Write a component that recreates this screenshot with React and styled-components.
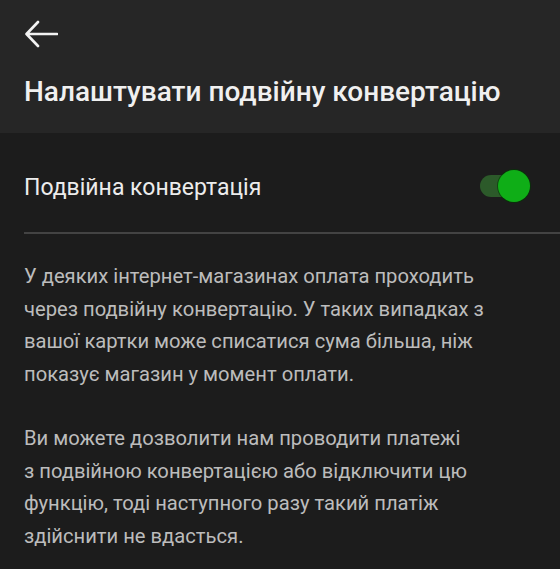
import React, { useState } from "react";
import styled, { createGlobalStyle } from "styled-components";

const GlobalStyle = createGlobalStyle`
  html, body {
    margin: 0;
    padding: 0;
    background: #1c1c1c;
  }
  body {
    font-family: Roboto, "Noto Sans", sans-serif;
  }
`;

const Screen = styled.div`
  width: 560px;
  min-height: 569px;
  background: #1c1c1c;
  overflow: hidden;
`;

const Header = styled.header`
  background: #262626;
  height: 133px;
  padding: 0 24px;
  box-sizing: border-box;
  display: flex;
  flex-direction: column;
`;

const BackButton = styled.button`
  width: 40px;
  height: 40px;
  margin-top: 14px;
  padding: 0;
  border: none;
  background: none;
  color: #f2f2f2;
  display: flex;
  align-items: center;
  cursor: pointer;
`;

const Title = styled.h1`
  margin: 20px 0 0;
  font-size: 28px;
  font-weight: 500;
  color: #f0f0f0;
  line-height: 36px;
`;

const Row = styled.div`
  display: flex;
  align-items: center;
  justify-content: space-between;
  margin-left: 24px;
  padding: 0 38px 0 0;
  height: 101px;
  border-bottom: 2px solid #434343;
  box-sizing: border-box;
`;

const RowLabel = styled.span`
  font-size: 23px;
  color: #ececec;
  margin-top: 9px;
`;

const Track = styled.div`
  position: relative;
  width: 42px;
  height: 22px;
  border-radius: 11px;
  background: ${(p) => (p.on ? "#2c5a2a" : "#555")};
  margin-top: 6px;
  cursor: pointer;
`;

const Thumb = styled.div`
  position: absolute;
  top: 50%;
  left: ${(p) => (p.on ? "18px" : "-6px")};
  width: 32px;
  height: 32px;
  margin-top: -16px;
  border-radius: 50%;
  background: ${(p) => (p.on ? "#0fae17" : "#ccc")};
  box-shadow: 0 0 0 1px rgba(0, 60, 0, 0.6);
`;

const Body = styled.div`
  padding: 26px 66px 0 24px;
`;

const Paragraph = styled.p`
  margin: 0 0 32px;
  font-size: 20.2px;
  line-height: 32.5px;
  color: #bcbcbc;
`;

const BackArrow = () => (
  <svg width="34" height="28" viewBox="0 0 34 28" fill="none">
    <path
      d="M33 14H3M14 2L2.5 14L14 26"
      stroke="currentColor"
      strokeWidth="2.6"
      strokeLinecap="round"
      strokeLinejoin="round"
    />
  </svg>
);

export default function App() {
  const [enabled, setEnabled] = useState(true);

  return (
    <Screen>
      <GlobalStyle />
      <Header>
        <BackButton aria-label="Назад">
          <BackArrow />
        </BackButton>
        <Title>Налаштувати подвійну конвертацію</Title>
      </Header>
      <Row>
        <RowLabel>Подвійна конвертація</RowLabel>
        <Track on={enabled} onClick={() => setEnabled(!enabled)}>
          <Thumb on={enabled} />
        </Track>
      </Row>
      <Body>
        <Paragraph>
          У деяких інтернет-магазинах оплата проходить через подвійну
          конвертацію. У таких випадках з вашої картки може списатися сума
          більша, ніж показує магазин у момент оплати.
        </Paragraph>
        <Paragraph>
          Ви можете дозволити нам проводити платежі з{"\u00a0"}подвійною
          конвертацією або відключити цю функцію, тоді наступного разу такий
          платіж здійснити не вдасться.
        </Paragraph>
      </Body>
    </Screen>
  );
}
